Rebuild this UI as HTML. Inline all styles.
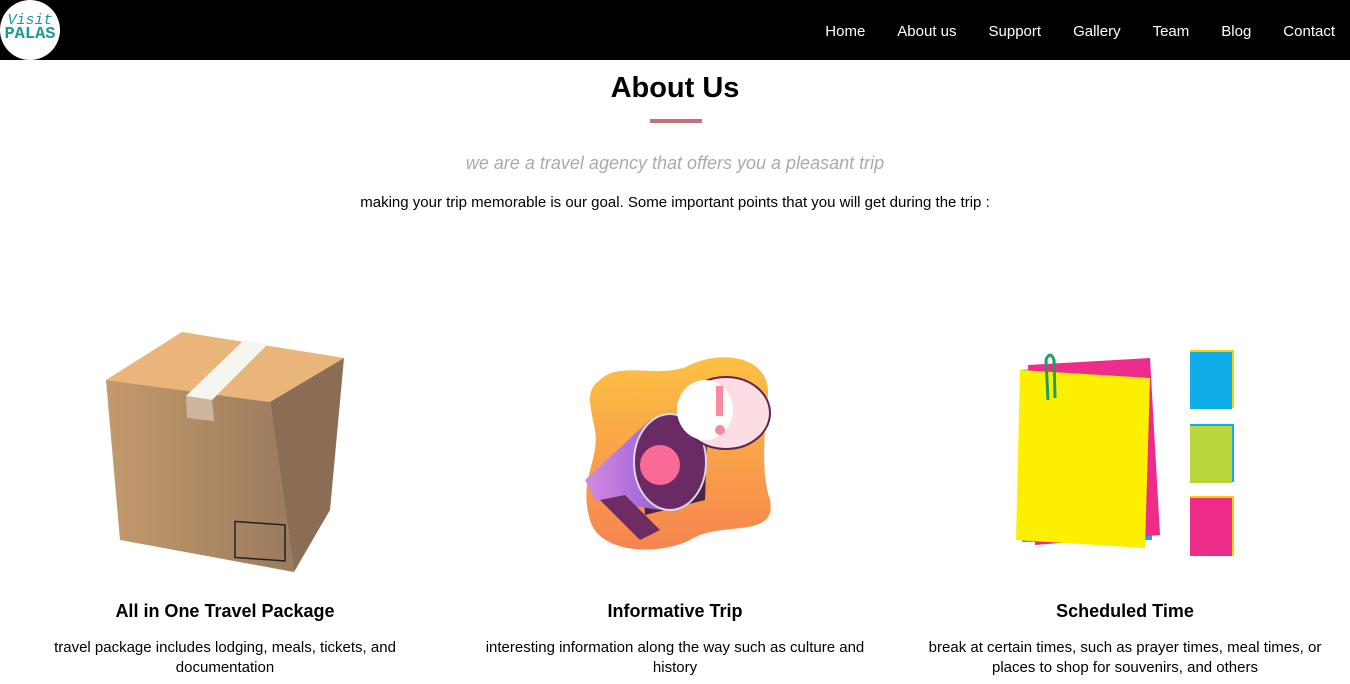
<!DOCTYPE html>
<html><head><meta charset="utf-8"><style>
*{margin:0;padding:0;box-sizing:border-box}
body{width:1350px;height:684px;overflow:hidden;background:#fff;font-family:"Liberation Sans",Arial,sans-serif;color:#000;position:relative}
nav{position:absolute;left:0;top:0;width:1350px;height:60px;background:#000}
.logo{position:absolute;left:0;top:0;width:60px;height:60px;border-radius:50%;background:#fff;color:#1a9a94;font-family:"Liberation Mono",monospace;text-align:center;line-height:14px;padding-top:14px}
.logo .a{font-size:15px;font-style:italic}.logo .b{font-size:17px;font-weight:bold;letter-spacing:0px}
nav ul{position:absolute;right:15px;top:23px;list-style:none;display:flex}
nav li{color:#fff;font-size:15px;margin-left:32px}
h1{position:absolute;top:72px;width:100%;text-align:center;font-size:29px;font-weight:bold}
.bar{position:absolute;left:650px;top:119px;width:52px;height:4px;background:#c5707f}
.sub{position:absolute;top:153px;width:100%;text-align:center;font-size:18px;font-style:italic;color:#aaa}
.txt{position:absolute;top:194px;width:100%;text-align:center;font-size:15px}
.col{position:absolute;top:601px;width:450px;text-align:center}
.col h3{font-size:18px;font-weight:bold;margin-bottom:16px}
.col p{font-size:15px;line-height:20px;margin:0 auto}
svg{position:absolute}
</style></head><body>
<nav><div class="logo"><div class="a">Visit</div><div class="b">PALAS</div></div>
<ul><li>Home</li><li>About us</li><li>Support</li><li>Gallery</li><li>Team</li><li>Blog</li><li>Contact</li></ul></nav>
<h1>About Us</h1><div class="bar"></div>
<div class="sub">we are a travel agency that offers you a pleasant trip</div>
<div class="txt">making your trip memorable is our goal. Some important points that you will get during the trip :</div>

<svg style="left:100px;top:325px" width="250" height="252" viewBox="100 325 250 252">
<defs><linearGradient id="g1" x1="0" x2="1"><stop offset="0" stop-color="#c49a6c"/><stop offset="1" stop-color="#9a7a5e"/></linearGradient></defs>
<polygon points="106,380 182,332 344,358 270,402" fill="#e9b57a"/>
<polygon points="106,380 270,402 294,572 120,540" fill="url(#g1)"/>
<polygon points="270,402 344,358 330,510 294,572" fill="#8b6d55"/>
<polygon points="186,396 212,400 268,344 244,340" fill="#f6f6f0"/>
<polygon points="186,396 212,400 214,421 187,418" fill="#cdb6a0"/>
<rect x="235" y="522" width="50" height="36" fill="none" stroke="#222" stroke-width="1.5" transform="skewY(4) translate(0,-17)"/>
</svg>

<svg style="left:575px;top:350px" width="200" height="206" viewBox="575 350 200 206">
<defs><linearGradient id="g2" x1="0" y1="0" x2="0" y2="1"><stop offset="0" stop-color="#fcc142"/><stop offset="1" stop-color="#f6844f"/></linearGradient>
<linearGradient id="g3" x1="0" x2="1"><stop offset="0" stop-color="#d58be0"/><stop offset="1" stop-color="#9b60d8"/></linearGradient></defs>
<path d="M600,380 C620,360 660,380 690,365 C720,350 770,355 768,395 C765,430 760,470 770,500 C778,540 720,520 690,540 C660,555 600,555 590,520 C578,480 600,460 595,430 C590,405 585,390 600,380Z" fill="url(#g2)"/>
<path d="M640,442 L708,412 L705,500 L645,515 Z" fill="#4a2347"/>
<path d="M585,480 L650,420 L660,510 L595,500Z" fill="url(#g3)"/>
<path d="M600,500 L640,540 L660,530 L625,495Z" fill="#6d2d62"/>
<ellipse cx="670" cy="462" rx="36" ry="48" fill="#6a2a63" stroke="#d8d8e8" stroke-width="2"/>
<circle cx="660" cy="465" r="20" fill="#f96a96"/>
<ellipse cx="726" cy="413" rx="44" ry="36" fill="#fbdde3" stroke="#5a2556" stroke-width="2"/>
<ellipse cx="705" cy="410" rx="28" ry="30" fill="#fff"/>
<rect x="716" y="386" width="7" height="30" fill="#f78a9e"/><circle cx="720" cy="430" r="5" fill="#f78a9e"/>
</svg>

<svg style="left:1010px;top:345px" width="235" height="220" viewBox="1010 345 235 220">
<polygon points="1020,370 1148,360 1152,540 1022,542" fill="#1ea6e8"/>
<polygon points="1028,365 1150,358 1160,535 1035,545" fill="#ee2c8a"/>
<polygon points="1020,370 1150,378 1145,548 1016,540" fill="#fcf000"/>
<path d="M1048,400 L1046,360 Q1050,350 1054,360 L1055,398" fill="none" stroke="#17a060" stroke-width="3"/>
<rect x="1190" y="350" width="44" height="58" fill="#fcd000"/><rect x="1190" y="352" width="42" height="57" fill="#10aee8"/>
<rect x="1190" y="424" width="44" height="58" fill="#10aee8"/><rect x="1190" y="426" width="42" height="57" fill="#b8d53c"/>
<rect x="1190" y="496" width="44" height="60" fill="#fcd000"/><rect x="1190" y="498" width="42" height="58" fill="#ee2c8a"/>
</svg>

<div class="col" style="left:0"><h3>All in One Travel Package</h3><p style="width:360px">travel package includes lodging, meals, tickets, and documentation</p></div>
<div class="col" style="left:450px"><h3>Informative Trip</h3><p style="width:385px">interesting information along the way such as culture and history</p></div>
<div class="col" style="left:900px"><h3>Scheduled Time</h3><p style="width:400px">break at certain times, such as prayer times, meal times, or places to shop for souvenirs, and others</p></div>
</body></html>
